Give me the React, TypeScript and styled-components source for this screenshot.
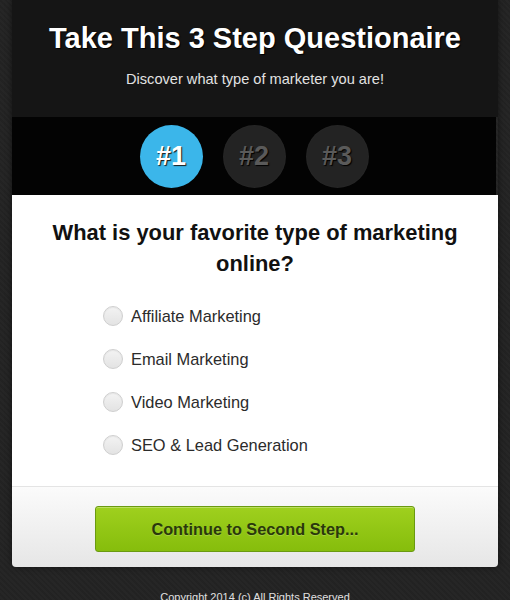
import React from "react";
import styled, { createGlobalStyle } from "styled-components";

const Global = createGlobalStyle`
  html, body { margin: 0; padding: 0; }
  body {
    background: #232323;
    background-image: repeating-linear-gradient(45deg, rgba(255,255,255,0.015) 0 2px, rgba(0,0,0,0.02) 2px 4px);
    font-family: "Liberation Sans", Arial, sans-serif;
  }
`;

const Page = styled.div`
  width: 510px;
  min-height: 600px;
  display: flex;
  flex-direction: column;
  align-items: center;
`;

const Card = styled.div`
  width: 486px;
  margin: 0 12px;
  display: flex;
  flex-direction: column;
  border-radius: 0 0 4px 4px;
  overflow: hidden;
  box-shadow: 0 0 6px rgba(0,0,0,0.5);
`;

const Header = styled.header`
  background: #151515;
  height: 117px;
  box-sizing: border-box;
  padding-top: 22px;
  display: flex;
  flex-direction: column;
  align-items: center;
`;

const Title = styled.h1`
  margin: 0;
  font-size: 29px;
  line-height: 32px;
  font-weight: bold;
  color: #ffffff;
  text-shadow: 1px 1px 1px #000;
  white-space: nowrap;
`;

const Subtitle = styled.p`
  margin: 16px 0 0;
  font-size: 14.6px;
  line-height: 18px;
  color: #e2e2e2;
`;

const Steps = styled.div`
  background: #030303;
  height: 78px;
  display: flex;
  justify-content: center;
  align-items: center;
  gap: 20px;
  margin-right: 2px;
`;

const Step = styled.div<{ $active?: boolean }>`
  width: 63px;
  height: 63px;
  border-radius: 50%;
  display: flex;
  align-items: center;
  justify-content: center;
  background: ${(p) => (p.$active ? "#3bb6ea" : "#232323")};
  color: ${(p) => (p.$active ? "#ffffff" : "#5a5a5a")};
  font-size: 27px;
  font-weight: bold;
  text-shadow: ${(p) => (p.$active ? "1px 1px 1px #1a1a1a" : "1px 1px 1px #000")};
  box-shadow: ${(p) => (p.$active ? "none" : "inset 0 0 3px rgba(255,255,255,0.04)")};
`;

const Body = styled.section`
  background: #ffffff;
  height: 292px;
  box-sizing: border-box;
  padding-top: 22px;
  display: flex;
  flex-direction: column;
  align-items: center;
  border-bottom: 1px solid #e4e4e4;
`;

const Question = styled.h2`
  margin: 0;
  width: 430px;
  text-align: center;
  font-size: 21.9px;
  line-height: 31px;
  font-weight: bold;
  color: #111111;
`;

const Options = styled.div`
  align-self: flex-start;
  margin: 27px 0 0 91px;
  display: flex;
  flex-direction: column;
  gap: 23px;
`;

const Option = styled.label`
  display: flex;
  align-items: center;
  gap: 8px;
  font-size: 16.4px;
  line-height: 20px;
  color: #2b2b2b;
`;

const Radio = styled.span`
  width: 18px;
  height: 18px;
  border-radius: 50%;
  border: 1px solid #cfcfcf;
  background: linear-gradient(#f3f3f3, #e3e3e3);
  box-shadow: inset 0 1px 1px rgba(0,0,0,0.05);
`;

const Footer = styled.div`
  height: 80px;
  background: linear-gradient(#fbfbfb, #e6e6e6);
  display: flex;
  justify-content: center;
  align-items: center;
  padding-top: 4px;
  box-sizing: border-box;
`;

const Button = styled.button`
  width: 320px;
  height: 46px;
  border: 1px solid #6a9a10;
  border-radius: 3px;
  background: linear-gradient(#9fd01e, #86bd0c);
  color: #2a380c;
  font-family: "Liberation Sans", Arial, sans-serif;
  font-size: 16.3px;
  font-weight: bold;
  text-shadow: 0 1px 0 rgba(255,255,255,0.2);
  box-shadow: inset 0 1px 0 rgba(255,255,255,0.3);
  cursor: pointer;
`;

const Copyright = styled.p`
  margin: 24px 0 0;
  font-size: 11px;
  line-height: 13px;
  color: #e0e0e0;
`;

const options = ["Affiliate Marketing", "Email Marketing", "Video Marketing", "SEO & Lead Generation"];

export default function App() {
  return (
    <Page>
      <Global />
      <Card>
        <Header>
          <Title>Take This 3 Step Questionaire</Title>
          <Subtitle>Discover what type of marketer you are!</Subtitle>
        </Header>
        <Steps>
          <Step $active>#1</Step>
          <Step>#2</Step>
          <Step>#3</Step>
        </Steps>
        <Body>
          <Question>What is your favorite type of marketing online?</Question>
          <Options>
            {options.map((o) => (
              <Option key={o}>
                <Radio />
                {o}
              </Option>
            ))}
          </Options>
        </Body>
        <Footer>
          <Button>Continue to Second Step...</Button>
        </Footer>
      </Card>
      <Copyright>Copyright 2014 (c) All Rights Reserved</Copyright>
    </Page>
  );
}
